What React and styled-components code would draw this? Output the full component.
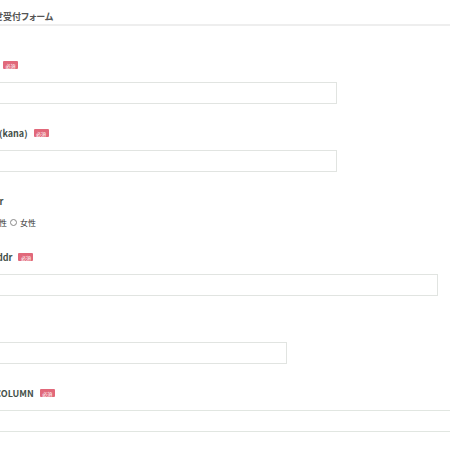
import React from "react";
import styled, { createGlobalStyle } from "styled-components";

const Global = createGlobalStyle`
  html, body { margin: 0; padding: 0; overflow: hidden; background: #fff; }
  body { font-family: "Noto Sans CJK JP", "Noto Sans", sans-serif; }
`;

const Page = styled.div`
  margin-left: -57px;
  width: 600px;
`;

const Title = styled.h1`
  margin: 0;
  padding: 11px 0 1px 7px;
  font-size: 9px;
  line-height: 12px;
  font-weight: 700;
  color: #555;
  font-feature-settings: "palt";
  border-bottom: 2px solid #eeeeee;
`;

const Form = styled.form`
  display: flex;
  flex-direction: column;
  gap: 23px;
  padding: 33px 0 0 28px;
`;

const Field = styled.div`
  display: flex;
  flex-direction: column;
  gap: ${(p) => p.$gap || 11}px;
`;

const Label = styled.label`
  display: flex;
  align-items: center;
  gap: 6px;
  height: 12px;
  font-size: 9px;
  font-weight: 700;
  color: #44504a;
  white-space: nowrap;
`;

const Badge = styled.span`
  display: inline-flex;
  align-items: center;
  justify-content: center;
  width: 15px;
  height: 8px;
  background: #e1687a;
  color: #fff;
  font-size: 5px;
  font-weight: 400;
  border-radius: 1px;
`;

const Input = styled.input`
  box-sizing: border-box;
  width: ${(p) => p.$w}px;
  height: 22px;
  border: 1px solid #e1e4e1;
  background: #fff;
  outline: none;
  margin: 0;
`;

const TextArea = styled.textarea`
  box-sizing: border-box;
  width: ${(p) => p.$w}px;
  height: 22px;
  border: 1px solid #e1e6e1;
  resize: none;
  margin: 0;
`;

const RadioRow = styled.div`
  display: flex;
  align-items: center;
  gap: 3px;
  height: 12px;
  padding-left: 10px;
  font-size: 8px;
  color: #333;
`;

const RadioOption = styled.label`
  display: inline-flex;
  align-items: center;
  gap: 3px;
`;

const Circle = styled.span`
  box-sizing: border-box;
  width: 7px;
  height: 7px;
  border-radius: 50%;
  border: 1px solid #888;
  background: #fff;
`;

export default function App() {
  return (
    <>
      <Global />
      <Page>
        <Title>お問い合わせ受付フォーム</Title>
        <Form>
          <Field>
            <Label>Name<Badge>必須</Badge></Label>
            <Input $w={366} />
          </Field>
          <Field>
            <Label>Name (kana)<Badge>必須</Badge></Label>
            <Input $w={366} />
          </Field>
          <Field $gap={9}>
            <Label>Gender</Label>
            <RadioRow>
              <RadioOption><Circle />男性</RadioOption>
              <RadioOption><Circle />女性</RadioOption>
            </RadioRow>
          </Field>
          <Field>
            <Label>Mail addr<Badge>必須</Badge></Label>
            <Input $w={467} />
          </Field>
          <Field>
            <Label>Tel</Label>
            <Input $w={316} />
          </Field>
          <Field>
            <Label>TEXT COLUMN<Badge>必須</Badge></Label>
            <TextArea $w={540} />
          </Field>
        </Form>
      </Page>
    </>
  );
}
